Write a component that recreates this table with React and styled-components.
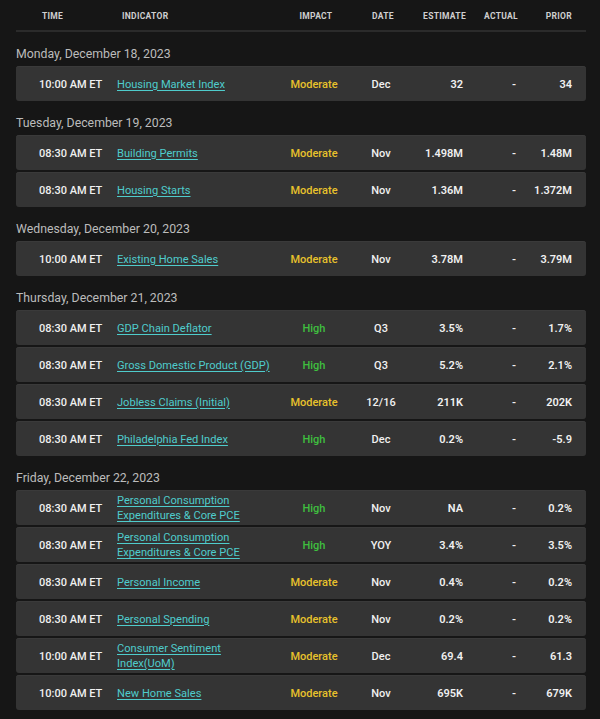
import React from "react";
import styled, { createGlobalStyle } from "styled-components";

const Global = createGlobalStyle`
  html, body { margin: 0; padding: 0; background: #161616; }
  body { font-family: Roboto, "Noto Sans", Arial, sans-serif; }
`;

const Page = styled.div`
  width: 570px;
  padding: 0 14px 10px 16px;
  background: #161616;
`;

const COLS = "94px 172px 64px 70px 55px 54px 61px";

const HeaderRow = styled.div`
  display: grid;
  grid-template-columns: ${COLS};
  height: 30px;
  align-items: center;
  border-bottom: 2px solid #2b2b2b;
`;

const HeadCell = styled.div`
  font-size: 8.5px;
  font-weight: 700;
  letter-spacing: 0.3px;
  color: #cfcfcf;
  text-transform: uppercase;
  text-align: ${(p) => p.$align || "left"};
  padding-left: ${(p) => p.$pl || 0}px;
  padding-right: ${(p) => p.$pr || 0}px;
  padding-top: 1px;
`;

const Group = styled.section`
  display: flex;
  flex-direction: column;
  gap: 2px;
`;

const GroupTitle = styled.div`
  font-size: 12.3px;
  line-height: 16px;
  color: #bcbcbc;
  padding: 14px 0 2px 0;
`;

const Row = styled.div`
  display: grid;
  grid-template-columns: ${COLS};
  align-items: center;
  height: 35px;
  padding-top: 1px;
  box-sizing: border-box;
  background: #343434;
  border-radius: 3px;
  box-shadow: inset 0 1px 0 #3a3a3a;
`;

const Cell = styled.div`
  font-size: 11px;
  font-weight: ${(p) => p.$weight || 500};
  color: #f0f0f0;
  text-align: ${(p) => p.$align || "left"};
  padding-left: ${(p) => p.$pl || 0}px;
  padding-right: ${(p) => p.$pr || 0}px;
  white-space: nowrap;
`;

const IndicatorCell = styled.div`
  padding-left: 7px;
  max-width: 160px;
  font-size: 11.1px;
  line-height: 15px;
`;

const Link = styled.a`
  color: #4fcccc;
  text-decoration: underline;
  text-underline-offset: 2px;
  text-decoration-thickness: 1px;
  cursor: pointer;
`;

const Impact = styled.div`
  font-size: 11px;
  font-weight: 500;
  text-align: center;
  color: ${(p) => (p.$level === "High" ? "#3fbf3f" : "#e8c22c")};
`;

const data = [
  {
    day: "Monday, December 18, 2023",
    rows: [["10:00 AM ET", "Housing Market Index", "Moderate", "Dec", "32", "-", "34"]],
  },
  {
    day: "Tuesday, December 19, 2023",
    rows: [
      ["08:30 AM ET", "Building Permits", "Moderate", "Nov", "1.498M", "-", "1.48M"],
      ["08:30 AM ET", "Housing Starts", "Moderate", "Nov", "1.36M", "-", "1.372M"],
    ],
  },
  {
    day: "Wednesday, December 20, 2023",
    rows: [["10:00 AM ET", "Existing Home Sales", "Moderate", "Nov", "3.78M", "-", "3.79M"]],
  },
  {
    day: "Thursday, December 21, 2023",
    rows: [
      ["08:30 AM ET", "GDP Chain Deflator", "High", "Q3", "3.5%", "-", "1.7%"],
      ["08:30 AM ET", "Gross Domestic Product (GDP)", "High", "Q3", "5.2%", "-", "2.1%"],
      ["08:30 AM ET", "Jobless Claims (Initial)", "Moderate", "12/16", "211K", "-", "202K"],
      ["08:30 AM ET", "Philadelphia Fed Index", "High", "Dec", "0.2%", "-", "-5.9"],
    ],
  },
  {
    day: "Friday, December 22, 2023",
    rows: [
      ["08:30 AM ET", "Personal Consumption Expenditures & Core PCE", "High", "Nov", "NA", "-", "0.2%"],
      ["08:30 AM ET", "Personal Consumption Expenditures & Core PCE", "High", "YOY", "3.4%", "-", "3.5%"],
      ["08:30 AM ET", "Personal Income", "Moderate", "Nov", "0.4%", "-", "0.2%"],
      ["08:30 AM ET", "Personal Spending", "Moderate", "Nov", "0.2%", "-", "0.2%"],
      ["10:00 AM ET", "Consumer Sentiment Index(UoM)", "Moderate", "Dec", "69.4", "-", "61.3"],
      ["10:00 AM ET", "New Home Sales", "Moderate", "Nov", "695K", "-", "679K"],
    ],
  },
];

export default function App() {
  return (
    <Page>
      <Global />
      <HeaderRow>
        <HeadCell $pl={26}>Time</HeadCell>
        <HeadCell $pl={12}>Indicator</HeadCell>
        <HeadCell $align="center" $pl={4}>Impact</HeadCell>
        <HeadCell $align="center" $pl={4}>Date</HeadCell>
        <HeadCell $align="right" $pr={5}>Estimate</HeadCell>
        <HeadCell $align="right" $pr={7}>Actual</HeadCell>
        <HeadCell $align="right" $pr={14}>Prior</HeadCell>
      </HeaderRow>
      {data.map((g) => (
        <Group key={g.day}>
          <GroupTitle>{g.day}</GroupTitle>
          {g.rows.map((r, i) => (
            <Row key={i}>
              <Cell $pl={23} $weight={500}>{r[0]}</Cell>
              <IndicatorCell>
                <Link>{r[1]}</Link>
              </IndicatorCell>
              <Impact $level={r[2]}>{r[2]}</Impact>
              <Cell $align="center">{r[3]}</Cell>
              <Cell $align="right" $pr={8} $weight={600}>{r[4]}</Cell>
              <Cell $align="right" $pr={9} $weight={600}>{r[5]}</Cell>
              <Cell $align="right" $pr={14} $weight={600}>{r[6]}</Cell>
            </Row>
          ))}
        </Group>
      ))}
    </Page>
  );
}
